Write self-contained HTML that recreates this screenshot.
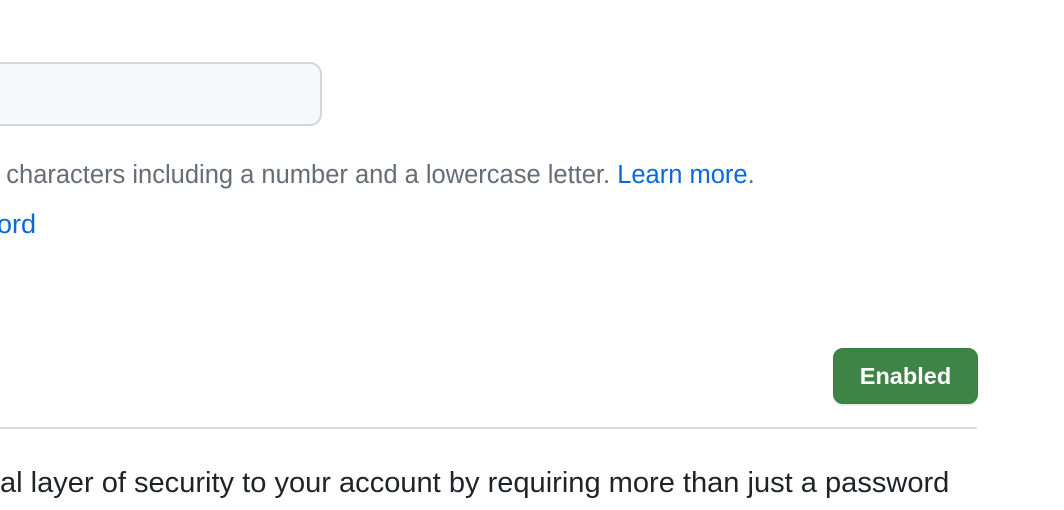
<!DOCTYPE html>
<html><head><style>
body{margin:0;width:1064px;height:510px;background:#fff;overflow:hidden;position:relative;font-family:"Liberation Sans",sans-serif}
.inp{position:absolute;left:-20px;top:62px;width:338px;height:60px;background:#f6f8fa;border:2px solid #d0d7de;border-radius:12px}
.t{position:absolute;white-space:nowrap}
.l1{left:-15px;top:161px;font-size:25.5px;color:#656d76}
.l1 a{color:#0969da;text-decoration:none}
.l2{left:-3px;top:209px;font-size:27px;color:#0969da}
.btn{position:absolute;left:833px;top:348px;width:143px;height:54px;background:#3f8447;border:1px solid #377a3f;border-radius:10px;color:#fff;font-weight:bold;font-size:23.5px;display:flex;align-items:center;justify-content:center;box-shadow:0 2px 0 rgba(0,0,0,.08)}
.hr{position:absolute;left:0;top:427px;width:977px;height:2px;background:#d8dee4}
.l3{left:0;top:467px;font-size:29.05px;color:#1f2328}
</style></head><body>
<div class="inp"></div>
<div class="t l1">8 characters including a number and a lowercase letter. <a>Learn more</a>.</div>
<div class="t l2">ord</div>
<div class="btn">Enabled</div>
<div class="hr"></div>
<div class="t l3">al layer of security to your account by requiring more than just a password</div>
</body></html>
